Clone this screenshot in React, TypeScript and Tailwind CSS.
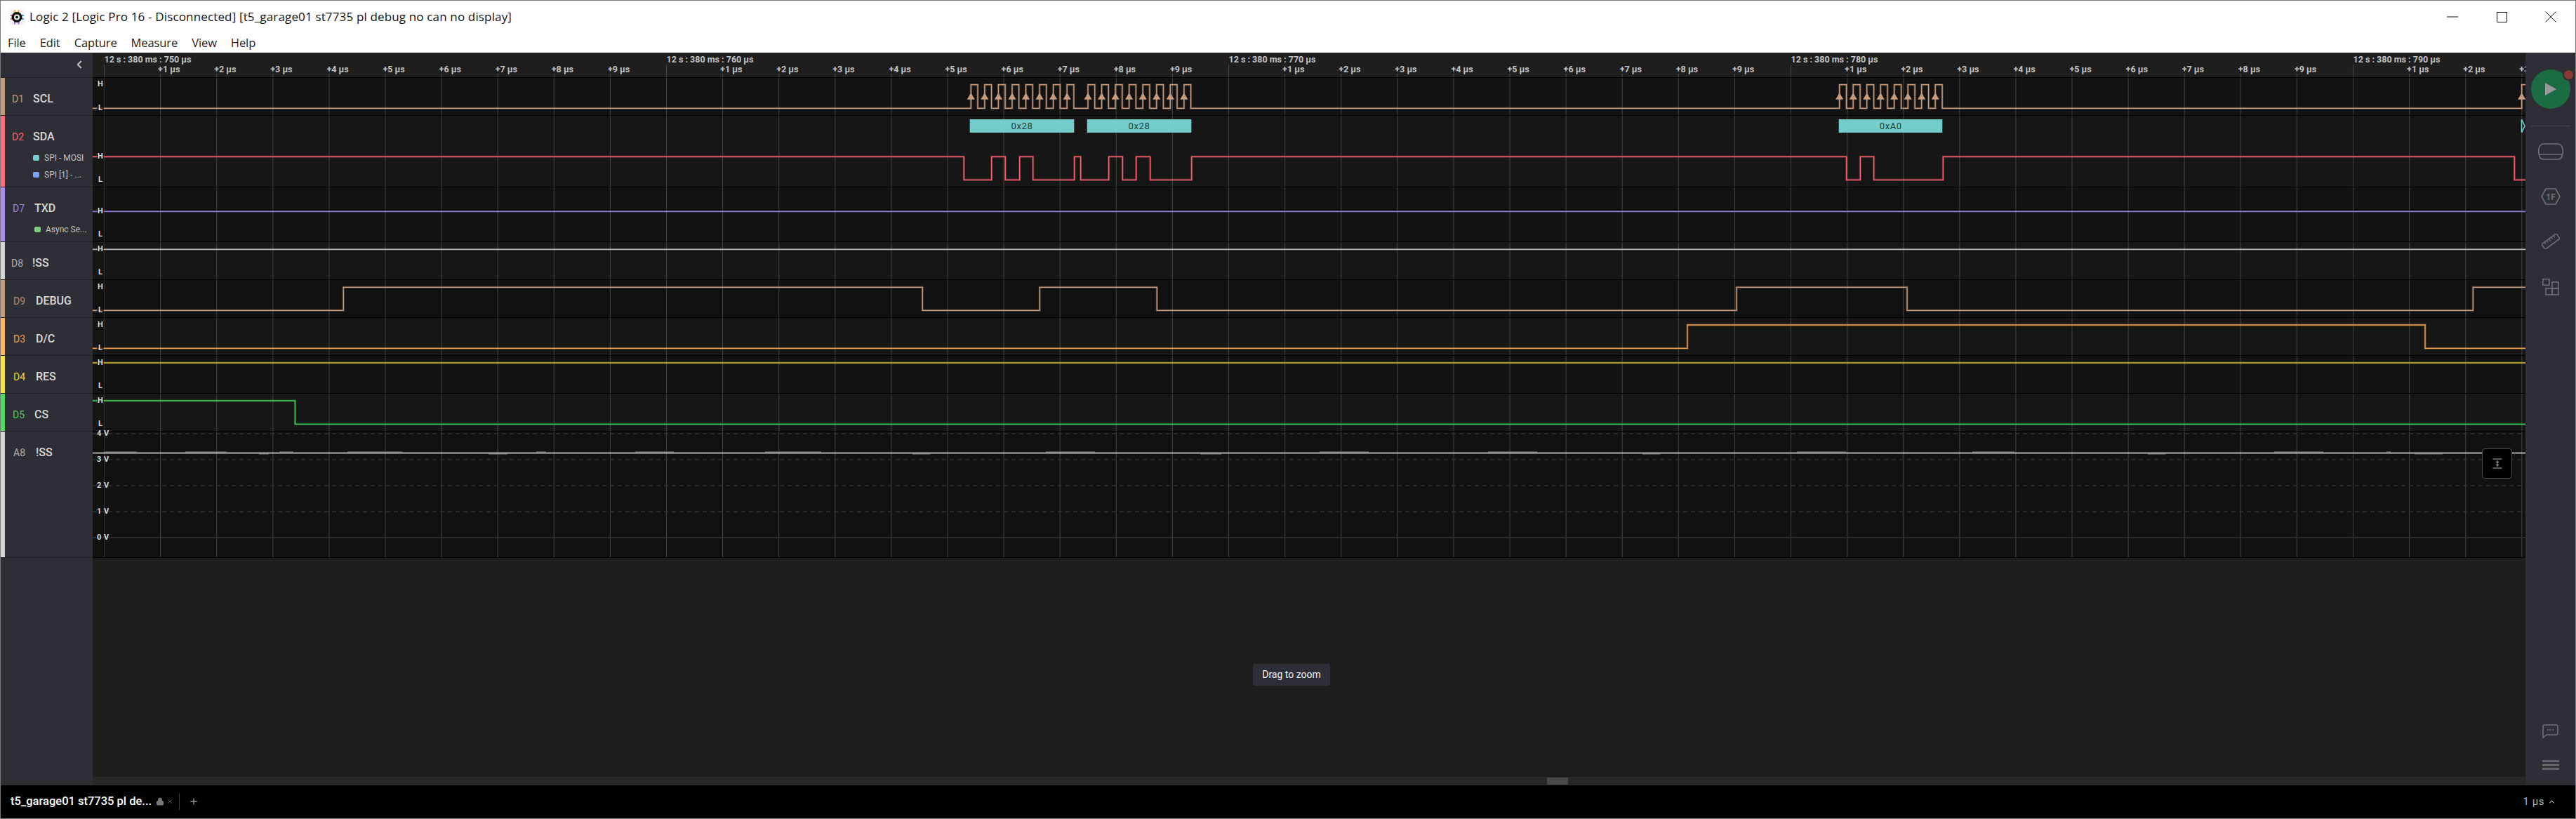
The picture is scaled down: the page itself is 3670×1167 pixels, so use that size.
import { ChevronLeft, ChevronUp, Lock, Plus, X } from 'lucide-react';

const CHART_X = 132;
const CHART_W = 3466;
const END_X = 3598;
const TICK_X0 = 148.5;
const TICK_STEP = 80.1;

const ticks = Array.from({ length: 44 }, (_, i) => i);

const burst = (start: number, period: number, width: number, count: number) => {
  const edges: number[] = [];
  for (let i = 0; i < count; i++) {
    edges.push(start + i * period, start + i * period + width);
  }
  return edges;
};

const sclEdges = [
  ...burst(1383.3, 19.55, 9.7, 8),
  ...burst(1550, 19.55, 9.7, 8),
  ...burst(2620.7, 19.5, 9.9, 8),
  3592.7,
];
const sclRises = sclEdges.filter((_, i) => i % 2 === 0);

const sdaEdges = [
  1373.3, 1412.7, 1432.3, 1452.7, 1471.7, 1530.7, 1539.7, 1579.7, 1599.3, 1618.7, 1638.7, 1697.7, 2630.7, 2650.3,
  2669.7, 2768.3, 3582.3,
];

const stepPath = (high: boolean, edges: number[], yH: number, yL: number) => {
  let level = high;
  let d = `M${CHART_X} ${level ? yH : yL}`;
  for (const x of edges) {
    d += ` H${x}`;
    level = !level;
    d += ` V${level ? yH : yL}`;
  }
  return d + ` H${END_X}`;
};

interface Sub {
  label: string;
  dot: string;
  rowClass: string;
}

interface Channel {
  id: string;
  name: string;
  top: number;
  height: number;
  rowClass: string;
  bg: string;
  stripe: string;
  idColor: string;
  idClass: string;
  nameClass: string;
  color: string;
  yH: number;
  yL: number;
  startHigh: boolean;
  edges: number[];
  subs?: Sub[];
}

const channels: Channel[] = [
  {
    id: 'D1',
    name: 'SCL',
    top: 111,
    height: 54,
    rowClass: 'h-[54px]',
    bg: 'bg-[#121212]',
    stripe: 'bg-[#c49a7c]',
    idColor: 'text-[#c49a7e]',
    idClass: 'ml-[10px]',
    nameClass: 'ml-[10px]',
    color: '#c99b7e',
    yH: 120.7,
    yL: 154.3,
    startHigh: false,
    edges: sclEdges,
  },
  {
    id: 'D2',
    name: 'SDA',
    top: 165,
    height: 102,
    rowClass: 'h-[102px]',
    bg: 'bg-[#161616]',
    stripe: 'bg-[#ff6c80]',
    idColor: 'text-[#ff6478]',
    idClass: 'ml-[10px]',
    nameClass: 'ml-[10px]',
    color: '#ff6274',
    yH: 223.3,
    yL: 256.3,
    startHigh: true,
    edges: sdaEdges,
    subs: [
      { label: 'SPI - MOSI', dot: 'bg-[#74cdca]', rowClass: 'ml-[40px]' },
      { label: 'SPI [1] - ...', dot: 'bg-[#7aa2f5]', rowClass: 'ml-[40px]' },
    ],
  },
  {
    id: 'D7',
    name: 'TXD',
    top: 267,
    height: 78,
    rowClass: 'h-[78px]',
    bg: 'bg-[#121212]',
    stripe: 'bg-[#a98cf0]',
    idColor: 'text-[#9a82e0]',
    idClass: 'ml-[11px]',
    nameClass: 'ml-[11px]',
    color: '#8f78d4',
    yH: 301.3,
    yL: 334,
    startHigh: true,
    edges: [],
    subs: [{ label: 'Async Se...', dot: 'bg-[#7cc87c]', rowClass: 'ml-[42px]' }],
  },
  {
    id: 'D8',
    name: '!SS',
    top: 345,
    height: 54,
    rowClass: 'h-[54px]',
    bg: 'bg-[#161616]',
    stripe: 'bg-[#d4d4d4]',
    idColor: 'text-[#b0b0b0]',
    idClass: 'ml-[9px]',
    nameClass: 'ml-[10px]',
    color: '#b4b4b4',
    yH: 355.3,
    yL: 388,
    startHigh: true,
    edges: [],
  },
  {
    id: 'D9',
    name: 'DEBUG',
    top: 399,
    height: 54,
    rowClass: 'h-[54px]',
    bg: 'bg-[#111111]',
    stripe: 'bg-[#c49a7c]',
    idColor: 'text-[#b08a74]',
    idClass: 'ml-[12px]',
    nameClass: 'ml-[12px]',
    color: '#c99b7e',
    yH: 409.3,
    yL: 442.3,
    startHigh: false,
    edges: [489.3, 1314.3, 1481.3, 1648.3, 2474, 2717, 3523.3],
  },
  {
    id: 'D3',
    name: 'D/C',
    top: 453,
    height: 54,
    rowClass: 'h-[54px]',
    bg: 'bg-[#161616]',
    stripe: 'bg-[#ffb35c]',
    idColor: 'text-[#e8a050]',
    idClass: 'ml-[12px]',
    nameClass: 'ml-[12px]',
    color: '#f0a04c',
    yH: 463,
    yL: 496.3,
    startHigh: false,
    edges: [2404, 3455],
  },
  {
    id: 'D4',
    name: 'RES',
    top: 507,
    height: 54,
    rowClass: 'h-[54px]',
    bg: 'bg-[#121212]',
    stripe: 'bg-[#fde03a]',
    idColor: 'text-[#e8d840]',
    idClass: 'ml-[12px]',
    nameClass: 'ml-[12px]',
    color: '#c8b432',
    yH: 517,
    yL: 550,
    startHigh: true,
    edges: [],
  },
  {
    id: 'D5',
    name: 'CS',
    top: 561,
    height: 54,
    rowClass: 'h-[54px]',
    bg: 'bg-[#161616]',
    stripe: 'bg-[#4fdc63]',
    idColor: 'text-[#4ec860]',
    idClass: 'ml-[11px]',
    nameClass: 'ml-[11px]',
    color: '#46c95a',
    yH: 571,
    yL: 604.3,
    startHigh: true,
    edges: [420.4],
  },
];

const annotations = [
  { x: 1381.3, w: 149.4, label: '0x28' },
  { x: 1548.3, w: 149.4, label: '0x28' },
  { x: 2619.3, w: 149, label: '0xA0' },
];

const volts = [
  { y: 618, label: '4 V' },
  { y: 655, label: '3 V' },
  { y: 692, label: '2 V' },
  { y: 729, label: '1 V' },
  { y: 766, label: '0 V' },
];

const analogNoise = [
  [148.5, 195, 643.8],
  [264, 323, 643.8],
  [369, 383, 647],
  [398, 418, 643.8],
  [495, 573, 643.8],
  [696, 723, 647],
  [764, 778, 643.8],
  [905, 960, 643.8],
  [1090, 1170, 643.8],
  [1300, 1325, 647],
  [1490, 1560, 643.8],
  [1710, 1740, 647],
  [1880, 1950, 643.8],
  [2120, 2190, 643.8],
  [2340, 2365, 647],
  [2560, 2630, 643.8],
  [2810, 2870, 643.8],
  [3060, 3085, 647],
  [3240, 3310, 643.8],
  [3400, 3406, 643.8],
  [3440, 3480, 647],
];

function Grid({ top, height }: { top: number; height: number }) {
  return (
    <>
      {ticks.map((i) => (
        <line
          key={i}
          x1={TICK_X0 + i * TICK_STEP}
          x2={TICK_X0 + i * TICK_STEP}
          y1={top}
          y2={top + height}
          stroke={i === 0 ? '#2e2e2e' : '#3d3d3d'}
          strokeWidth="1.2"
        />
      ))}
    </>
  );
}

function Trace({ d, color }: { d: string; color: string }) {
  return (
    <>
      <path d={d} fill="none" stroke={color} strokeOpacity="0.35" strokeWidth="3" />
      <path d={d} fill="none" stroke={color} strokeWidth="1.3" />
    </>
  );
}

function LevelMark({ y, top, label }: { y: number; top: number; label: string }) {
  return (
    <span
      className="absolute left-[6px] flex h-[14px] w-[10px] -translate-y-1/2 items-center justify-center bg-[#121212]/70 font-['Roboto',sans-serif] text-[11px] font-bold text-[#dddddd]"
      style={{ top: y - top }}
    >
      {label}
    </span>
  );
}

function ChannelLabel({ ch }: { ch: Channel }) {
  return (
    <div className="flex h-full w-[131px] shrink-0 border-b border-[#232428] bg-[#2e2f36]">
      <div className={`w-[6px] shrink-0 ${ch.stripe}`} />
      <div className="flex flex-1 flex-col">
        <div className="mt-[20px] flex h-[20px] items-center">
          <span className={`w-[20px] shrink-0 text-[14px] ${ch.idColor} ${ch.idClass}`}>{ch.id}</span>
          <span className={`text-[16px] font-medium text-[#d8d8d8] ${ch.nameClass}`}>{ch.name}</span>
        </div>
        {ch.subs && (
          <div className="mt-[8px] flex flex-col">
            {ch.subs.map((sub) => (
              <div key={sub.label} className={`flex h-[24px] items-center gap-[7px] ${sub.rowClass}`}>
                <span className={`h-[8px] w-[9px] shrink-0 rounded-[2px] ${sub.dot}`} />
                <span className="whitespace-nowrap text-[12px] text-[#c4c4c4]">{sub.label}</span>
              </div>
            ))}
          </div>
        )}
      </div>
    </div>
  );
}

function ChannelRow({ ch }: { ch: Channel }) {
  const chartH = ch.height - 1;
  return (
    <div className={`flex ${ch.rowClass}`}>
      <ChannelLabel ch={ch} />
      <div className={`relative flex-1 overflow-hidden border-b border-black ${ch.bg}`}>
        <svg
          width={CHART_W}
          height={chartH}
          viewBox={`${CHART_X} ${ch.top} ${CHART_W} ${chartH}`}
          className="block"
        >
          <Grid top={ch.top} height={chartH} />
          <Trace d={stepPath(ch.startHigh, ch.edges, ch.yH, ch.yL)} color={ch.color} />
          {ch.id === 'D1' &&
            sclRises.map((x) => (
              <polygon key={x} points={`${x},132.3 ${x + 5.6},141.7 ${x - 5.6},141.7`} fill="#c99b7e" />
            ))}
          {ch.id === 'D2' && (
            <path d="M3592.5 170 V189 M3593 171 L3597 179.5 L3593 188" fill="none" stroke="#74cdca" strokeWidth="1.6" />
          )}
        </svg>
        <LevelMark y={ch.yH} top={ch.top} label="H" />
        <LevelMark y={ch.yL} top={ch.top} label="L" />
        {ch.id === 'D2' &&
          annotations.map((a) => (
            <div
              key={a.x}
              className="absolute top-[5px] flex h-[19px] items-center justify-center border-x border-[#444444] bg-[#74cdca] font-['Roboto',sans-serif] text-[13px] tracking-[0.6px] text-[#1d3d3d]"
              style={{ left: a.x - CHART_X, width: a.w }}
            >
              {a.label}
            </div>
          ))}
      </div>
    </div>
  );
}

function AnalogRow() {
  const top = 615;
  const chartH = 179;
  return (
    <div className="flex h-[180px]">
      <div className="flex h-full w-[131px] shrink-0 border-b border-[#232428] bg-[#2e2f36]">
        <div className="w-[6px] shrink-0 bg-[#d4d4d4]" />
        <div className="flex flex-1 flex-col">
          <div className="mt-[20px] flex h-[20px] items-center">
            <span className="ml-[12px] w-[20px] shrink-0 text-[14px] text-[#b0b0b0]">A8</span>
            <span className="ml-[12px] text-[16px] font-medium text-[#d8d8d8]">!SS</span>
          </div>
        </div>
      </div>
      <div className="relative flex-1 border-b border-black bg-[#111111]">
        <svg width={CHART_W} height={chartH} viewBox={`${CHART_X} ${top} ${CHART_W} ${chartH}`} className="block">
          <Grid top={top} height={chartH} />
          {volts.map((v) => (
            <line
              key={v.label}
              x1={CHART_X}
              x2={END_X}
              y1={v.y}
              y2={v.y}
              stroke={v.label === '0 V' ? '#333333' : '#303030'}
              strokeWidth="1.5"
              strokeDasharray={v.label === '0 V' ? undefined : '6 5'}
            />
          ))}
          {analogNoise.map(([a, b, y]) => (
            <line key={a} x1={a} x2={b} y1={y} y2={y} stroke="#666666" strokeWidth="1.2" />
          ))}
          <line x1={CHART_X} x2={END_X} y1="645.5" y2="645.5" stroke="#eeeeee" strokeWidth="1.5" />
        </svg>
        {volts.map((v) => (
          <span
            key={v.label}
            className="absolute left-[6px] flex h-[12px] -translate-y-1/2 items-center whitespace-nowrap font-['Roboto',sans-serif] text-[11px] font-bold tracking-[0.5px] text-[#dddddd]"
            style={{ top: v.y - top }}
          >
            {v.label}
          </span>
        ))}
        <button
          type="button"
          className="absolute left-[3404px] top-[24px] flex h-[43px] w-[43px] items-center justify-center rounded-[4px] border border-[#4c4c4c] bg-black"
        >
          <svg width="14" height="15" viewBox="0 0 14 15" fill="none" stroke="#77787c">
            <path d="M0.5 1 H13.5 M0.5 14 H13.5" strokeWidth="1.4" />
            <path d="M7 3.5 V11.5" strokeWidth="1.4" />
            <path d="M4.8 6 L7 3.5 L9.2 6 Z M4.8 9 L7 11.5 L9.2 9 Z" fill="#77787c" strokeWidth="0.8" />
          </svg>
        </button>
      </div>
    </div>
  );
}

function Timeline() {
  return (
    <div className="flex h-[36px]">
      <div className="flex h-full w-[131px] shrink-0 items-start justify-end border-b border-[#232428] bg-[#2e2f36] pr-[10px] pt-[8px]">
        <ChevronLeft size={18} strokeWidth={2.6} className="text-[#c4c4c4]" />
      </div>
      <div className="relative flex-1 overflow-hidden border-b border-black bg-[#1e1e1e]">
        <svg width={CHART_W} height="35" viewBox={`${CHART_X} 75 ${CHART_W} 35`} className="block">
          {ticks.map((i) => (
            <line
              key={i}
              x1={TICK_X0 + i * TICK_STEP}
              x2={TICK_X0 + i * TICK_STEP}
              y1={i % 10 === 0 ? 92 : 105}
              y2="110"
              stroke="#444444"
              strokeWidth="1.2"
            />
          ))}
        </svg>
        {ticks.map((i) =>
          i % 10 === 0 ? (
            <span
              key={i}
              className="absolute top-[2px] whitespace-nowrap font-['Roboto',sans-serif] text-[12.5px] font-bold leading-[16px] text-[#c4c4c4]"
              style={{ left: TICK_X0 + i * TICK_STEP - CHART_X }}
            >
              12 s : 380 ms : {750 + i} µs
            </span>
          ) : (
            <span
              key={i}
              className="absolute top-[16px] whitespace-nowrap font-['Roboto',sans-serif] text-[12.5px] font-bold leading-[16px] text-[#c4c4c4]"
              style={{ left: TICK_X0 + i * TICK_STEP - CHART_X - 3.5 }}
            >
              +{i % 10} µs
            </span>
          ),
        )}
      </div>
    </div>
  );
}

function AppIcon() {
  return (
    <svg width="23" height="23" viewBox="0 0 23 23">
      <rect x="0" y="0" width="23" height="23" rx="5" fill="#f3f3f8" />
      <path d="M8 1.5 V5 M13.5 1.5 V5" stroke="#f5a623" strokeWidth="2" />
      <path d="M2 9 H5 M2 14 H5" stroke="#ef5a6a" strokeWidth="2" />
      <path d="M18 9 H21 M18 14 H21" stroke="#3b9df0" strokeWidth="2" />
      <path d="M8 18 V21.5 M13.5 18 V21.5" stroke="#b05cf0" strokeWidth="2" />
      <circle cx="11" cy="11.5" r="7.5" fill="#111111" />
      <circle cx="11" cy="11.5" r="4" fill="#f3f3f8" />
      <circle cx="11" cy="11.5" r="2" fill="#111111" />
    </svg>
  );
}

function TitleBar() {
  return (
    <div className="h-[74px] shrink-0 bg-white">
      <div className="flex h-[46px] items-center">
        <div className="ml-[12px] flex items-center gap-[6px]">
          <AppIcon />
          <span className="whitespace-nowrap font-['Open_Sans',sans-serif] text-[17px] tracking-[0.15px] text-[#111111]">
            Logic 2 [Logic Pro 16 - Disconnected] [t5_garage01 st7735 pl debug no can no display]
          </span>
        </div>
        <div className="ml-auto flex">
          <div className="flex h-[46px] w-[70px] items-center justify-center">
            <svg width="16" height="2" viewBox="0 0 16 2">
              <path d="M0 1 H16" stroke="#111111" strokeWidth="1" />
            </svg>
          </div>
          <div className="flex h-[46px] w-[70px] items-center justify-center">
            <svg width="15" height="15" viewBox="0 0 15 15">
              <rect x="0.5" y="0.5" width="14" height="14" fill="none" stroke="#111111" />
            </svg>
          </div>
          <div className="flex h-[46px] w-[70px] items-center justify-center">
            <svg width="16" height="16" viewBox="0 0 16 16">
              <path d="M0.5 0.5 L15.5 15.5 M15.5 0.5 L0.5 15.5" stroke="#111111" strokeWidth="1" />
            </svg>
          </div>
        </div>
      </div>
      <div className="flex h-[28px] items-center gap-[20px] pl-[10px] font-['Open_Sans',sans-serif] text-[16.5px] tracking-[-0.1px] text-[#222222]">
        {['File', 'Edit', 'Capture', 'Measure', 'View', 'Help'].map((item) => (
          <span key={item}>{item}</span>
        ))}
      </div>
    </div>
  );
}

function Rail() {
  const stroke = '#6f7075';
  return (
    <div className="flex w-[71px] shrink-0 flex-col items-center bg-[#2e2f36] pt-[24px]">
      <div className="relative flex h-[56px] w-[56px] items-center justify-center rounded-full bg-[#1b6b43]">
        <svg width="16" height="18" viewBox="0 0 16 18">
          <path d="M0 0 L16 9 L0 18 Z" fill="#9a9a9a" />
        </svg>
        <span className="absolute right-[-6px] top-[-1px] h-[17px] w-[17px] rounded-full border-2 border-[#2e2f36] bg-[#8b3a32]" />
      </div>
      <div className="mt-[24px] h-px w-[56px] bg-[#4a4b50]" />
      <svg className="mt-[24px]" width="36" height="24" viewBox="0 0 36 24" fill="none" stroke={stroke} strokeWidth="1.6">
        <path d="M8 1 H28 C32 1 34 4 35 8 C35.5 12 35 16 34 19 C33 22 31 23 28 23 H8 C5 23 3 22 2 19 C1 16 0.5 12 1 8 C2 4 4 1 8 1 Z" />
        <path d="M1.5 16 H34.5" />
      </svg>
      <svg className="mt-[40px]" width="28" height="24" viewBox="0 0 28 24" fill="none" stroke={stroke} strokeWidth="1.6">
        <polygon points="7,1 21,1 27,12 21,23 7,23 1,12" />
        <text x="14" y="16.5" textAnchor="middle" fill={stroke} stroke="none" fontFamily="Roboto, sans-serif" fontWeight="700" fontSize="12">
          1F
        </text>
      </svg>
      <svg className="mt-[41px]" width="26" height="22" viewBox="0 0 26 22" fill="none" stroke={stroke} strokeWidth="1.6">
        <g transform="rotate(-36 13 11)">
          <rect x="0" y="6.5" width="26" height="9" />
          <path d="M5 6.5 V10 M9 6.5 V10 M13 6.5 V11.5 M17 6.5 V10 M21 6.5 V10" strokeWidth="1.2" />
        </g>
      </svg>
      <svg className="mt-[42px]" width="24" height="24" viewBox="0 0 24 24" fill="none" stroke={stroke} strokeWidth="1.6">
        <rect x="0.8" y="0.8" width="9" height="8.5" />
        <rect x="14" y="5" width="9" height="9" />
        <rect x="5" y="14" width="9" height="9" />
        <rect x="14" y="14" width="9" height="9" />
      </svg>
      <svg className="mt-auto" width="23" height="20" viewBox="0 0 23 20" fill="none" stroke={stroke} strokeWidth="1.6">
        <path d="M3 1 H20 C21.3 1 22 1.7 22 3 V13 C22 14.3 21.3 15 20 15 H6 L1 19 V3 C1 1.7 1.7 1 3 1 Z" />
        <path d="M7 8 H8.6 M10.7 8 H12.3 M14.4 8 H16" strokeWidth="1.8" />
      </svg>
      <svg className="mb-[22px] mt-[31px]" width="24" height="14" viewBox="0 0 24 14" fill="none" stroke={stroke} strokeWidth="2.4">
        <path d="M0 1.5 H24 M0 7 H24 M0 12.5 H24" />
      </svg>
    </div>
  );
}

export default function App() {
  return (
    <div className="flex h-[1167px] w-[3670px] flex-col overflow-hidden border border-[#7a7a7a] bg-white font-['Roboto',sans-serif]">
      <TitleBar />
      <div className="flex min-h-0 flex-1">
        <div className="flex min-w-0 flex-1 flex-col">
          <Timeline />
          {channels.map((ch) => (
            <ChannelRow key={ch.id} ch={ch} />
          ))}
          <AnalogRow />
          <div className="flex min-h-0 flex-1">
            <div className="w-[131px] shrink-0 bg-[#2e2f36]" />
            <div className="flex flex-1 flex-col">
              <div className="relative flex-1 bg-[#1e1e1e]">
                <div className="absolute left-[1653px] top-[151px] flex h-[31px] w-[110px] items-center justify-center rounded-[3px] bg-[#2e2f36] text-[14px] text-[#eeeeee]">
                  Drag to zoom
                </div>
              </div>
              <div className="relative h-[12px] bg-[#282828]">
                <div className="absolute left-[2072px] top-[1px] h-[10px] w-[30px] bg-[#494949]" />
              </div>
            </div>
          </div>
        </div>
        <Rail />
      </div>
      <div className="flex h-[47px] shrink-0 items-center bg-black pb-[1px] pl-[14px] pr-[28px]">
        <span className="w-[205px] whitespace-nowrap text-[16.5px] font-medium text-white">t5_garage01 st7735 pl de...</span>
        <Lock size={12} fill="#77787c" stroke="#77787c" className="ml-[2px]" />
        <X size={10} className="ml-[3px] text-[#6f6f6f]" />
        <div className="ml-[8px] h-[24px] w-px bg-[#3a3a3a]" />
        <Plus size={14} strokeWidth={2.2} className="ml-[13px] text-[#999999]" />
        <div className="ml-auto flex items-center gap-[5px] text-[15px] tracking-[0.5px] text-[#a8b0b8]">
          <span>1 µs</span>
          <ChevronUp size={11} strokeWidth={2.6} />
        </div>
      </div>
    </div>
  );
}
